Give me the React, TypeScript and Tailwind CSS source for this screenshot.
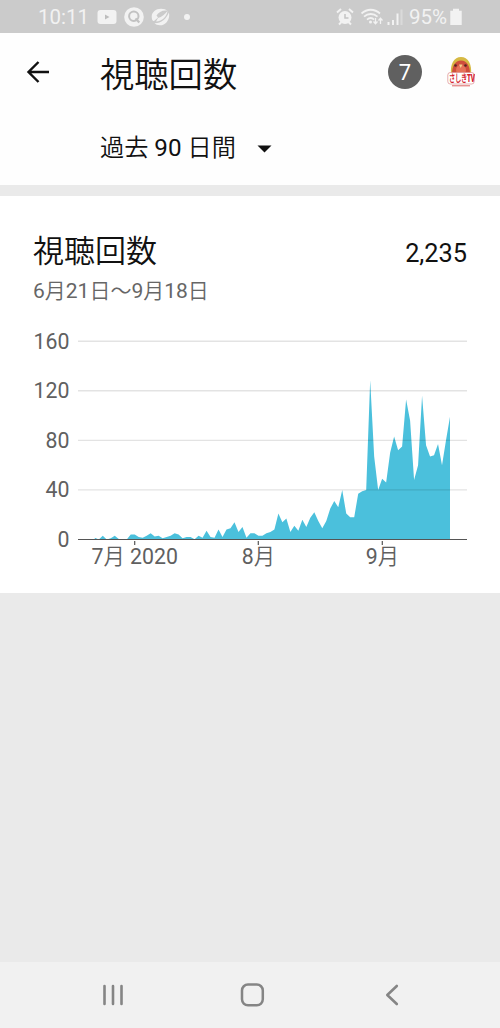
// daily views, June 21 - September 18
const views = [
  1.5, 0, 3, 0, 1, 3, 0.5, 0.5, 0, 4, 4, 2, 1.5, 3, 5, 2.5, 3, 1, 2, 3, 5, 4, 1, 2, 2, 0.3, 3, 1.5, 7,
  2, 1.5, 8, 2, 8, 9, 14, 6, 10, 1.5, 5, 5, 3, 3, 5, 6, 8, 21, 14, 17, 6, 11, 7, 16, 10, 17.5, 22, 15, 9, 15,
  25, 31, 26, 40, 21, 18, 18, 37, 39, 40, 128.5, 67, 40, 49, 46, 70, 83, 72, 75, 113, 96, 48, 60, 116, 76, 67, 68, 77, 60, 80, 99,
];

const yTicks = [160, 120, 80, 40, 0];
const xTicks = [
  { label: '7月 2020', x: 134.7 },
  { label: '8月', x: 258.3 },
  { label: '9月', x: 382.3 },
];

const BASE = 219.5;
const toY = (v: number) => BASE - v * 1.2395;

function StatusBar() {
  return (
    <div className="flex h-[33px] shrink-0 items-center bg-[#cbcbcb] pl-[38px] text-[20.5px] leading-none text-[#f2f2f2]">
      <span className="w-[59px] pt-0.5">10:11</span>
      <svg className="mr-[7px]" width="20" height="16" viewBox="0 0 20 16">
        <rect x="0.5" y="1" width="19" height="14" rx="3" fill="#f2f2f2" />
        <path d="M8 5.5v5l4.5-2.5z" fill="#bdbdbd" />
      </svg>
      <svg className="mr-[7px]" width="20" height="20" viewBox="0 0 20 20">
        <circle cx="10" cy="10" r="9.8" fill="#f2f2f2" />
        <circle cx="9.8" cy="9.3" r="4.7" fill="none" stroke="#c2c2c2" strokeWidth="2" />
        <path d="M11.5 11.5l3.8 4" stroke="#c2c2c2" strokeWidth="2.2" />
      </svg>
      <svg width="19" height="18" viewBox="0 0 19 18">
        <path d="M1 11C-.5 5 4 .7 10 .7c3 0 5 .8 6.500 2C12 1.800 7.500 4 5.500 7.500L7 9.500 3 13C2 13 1.300 12.500 1 11z" fill="#f2f2f2" />
        <path d="M17.800 4.500C19.500 10 15.500 17.300 9 17.300c-2.500 0-4.500-.8-5.500-2C10 15.500 15.500 11 17.800 4.500z" fill="#f2f2f2" />
        <path d="M7 10C11 9 14 6 16.500 3 15.500 9 11.500 13 5 13.500z" fill="#f2f2f2" />
      </svg>
      <span className="ml-[14px] size-1.5 rounded-full bg-[#f2f2f2]" />
      <svg className="ml-auto" width="18" height="18" viewBox="0 0 18 18" fill="none" stroke="#f2f2f2">
        <circle cx="9" cy="9.5" r="6.5" fill="#f2f2f2" stroke="none" />
        <path d="M9 6v4h3.500" stroke="#c4c4c4" strokeWidth="1.5" />
        <path d="M1 4.500l4-3.500M17 4.500l-4-3.500M3 16.500l2.500-2.500M15 16.500L12.500 14" strokeWidth="2" />
      </svg>
      <svg className="ml-1.5" width="24" height="18" viewBox="0 0 24 18" fill="none" stroke="#f2f2f2" strokeWidth="1.8">
        <path d="M1.500 5.500c5.500-5 13-5 18.500 0M4 8.700c4-3.600 9.500-3.600 13.500 0M7 11.600c2.500-2 5-2 7 0" />
        <circle cx="10.500" cy="14" r="1.500" fill="#f2f2f2" stroke="none" />
        <path d="M15.500 10v5.500M13.500 13.500l2 2.200 2-2.200M20.500 16v-5.500M18.500 12.500l2-2.200 2 2.200" strokeWidth="1.300" />
      </svg>
      <svg className="ml-[3px]" width="17" height="18" viewBox="0 0 17 18" strokeWidth="2">
        <path d="M1.500 17v-3M6 17V12M10.500 17V5.500" stroke="#f2f2f2" />
        <path d="M14.500 17V1.500" stroke="#dadada" />
      </svg>
      <span className="ml-[5px] w-[41px] pt-0.5">95%</span>
      <svg className="mr-[38px]" width="12" height="18" viewBox="0 0 12 18">
        <path d="M3 .8h6v2h2.700V17H.3V2.800H3z" fill="#f2f2f2" />
      </svg>
    </div>
  );
}

function Avatar() {
  return (
    <svg width="28" height="32" viewBox="0 0 28 32">
      <path d="M4 18C3 8 7 1 14 1s11 7 10 17z" fill="#d6b943" />
      <path d="M5 18c0-8 3-13.500 9-13.500S23 10 23 18z" fill="#cf4d3c" />
      <ellipse cx="14" cy="14" rx="5" ry="5" fill="#e57259" />
      <circle cx="8.500" cy="9.500" r="1.300" fill="#512522" />
      <circle cx="18.500" cy="9.500" r="1.300" fill="#512522" />
      <path d="M12 8.500h3.500L13.700 12z" fill="#f4d38b" />
      <rect x="0.800" y="16.500" width="26.400" height="11.500" rx="2.500" fill="#fff" stroke="#dc8c8c" strokeWidth="0.700" />
      <g transform="translate(2 26.200) scale(.63 1)" fontSize="10" fontWeight="900" fill="#d3202c">
        <text letterSpacing="-0.5">さしきTV</text>
      </g>
      <path d="M5 29.800h18" stroke="#d66" strokeWidth="1" />
    </svg>
  );
}

function ViewsChart() {
  const step = (450 - 94.8) / (views.length - 1);
  const points = views.map((v, i) => `${94.8 + i * step},${toY(v)}`).join(' ');

  return (
    <svg className="block" width="500" height="260" viewBox="0 0 500 260" fontSize="21.3" fill="#606060">
      <polygon points={`94.8,${BASE} ${points} 450,${BASE}`} fill="#4bc0dc" />
      {yTicks.map((v) => (
        <g key={v}>
          <text x="69.500" y={toY(v) + 7.5} textAnchor="end">{v}</text>
          <line x1="78" x2="467" y1={toY(v)} y2={toY(v)} stroke={v ? '#000' : '#555'} strokeOpacity={v ? 0.11 : 1} strokeWidth={v ? 1.4 : 1.2} />
        </g>
      ))}
      {xTicks.map((t) => (
        <g key={t.label}>
          <line x1={t.x} x2={t.x} y1="221" y2="225" stroke="#555" strokeWidth="1.2" />
          <text x={t.x} y="244" textAnchor="middle">{t.label}</text>
        </g>
      ))}
    </svg>
  );
}

function NavBar() {
  return (
    <div className="flex h-[66px] shrink-0 items-center bg-[#f1f1f1] pl-[102px]">
      <svg width="22" height="24" viewBox="0 0 22 24" stroke="#858585" strokeWidth="2.6" strokeLinecap="round">
        <path d="M2.500 3v18M11 3v18M19.500 3v18" />
      </svg>
      <svg className="ml-[116px]" width="25" height="24" viewBox="0 0 25 24">
        <rect x="2" y="1.500" width="20.800" height="20.800" rx="6" fill="none" stroke="#858585" strokeWidth="2.5" />
      </svg>
      <svg className="ml-[120px]" width="14" height="24" viewBox="0 0 14 24" fill="none" stroke="#858585" strokeWidth="2.6" strokeLinecap="round" strokeLinejoin="round">
        <path d="M11.800 3L2.300 12l9.500 9" />
      </svg>
    </div>
  );
}

export default function App() {
  return (
    <div className="flex h-[1028px] w-[500px] flex-col bg-[#eaeaea] font-['Roboto','Noto_Sans_CJK_JP_DemiLight','Noto_Sans_CJK_JP',sans-serif] text-[#111]">
      <StatusBar />
      <header className="h-[152px] shrink-0 bg-[#fefefe]">
        <div className="flex h-[78px] items-center pr-[25px] pl-[26px]">
          <svg width="24" height="24" viewBox="0 0 24 24" fill="none" stroke="#111" strokeWidth="2.4">
            <path d="M23 12H2.500M12.500 2L2.500 12l10 10" />
          </svg>
          <h1 className="ml-[50px] pt-1.5 text-[34.3px] leading-none">視聴回数</h1>
          <span className="ml-auto flex size-[34px] items-center justify-center rounded-full bg-[#606060] pt-0.5 text-[22px] leading-none text-white">7</span>
          <div className="ml-[25px]">
            <Avatar />
          </div>
        </div>
        <button className="flex h-[74px] items-center pl-[100px] text-[24.2px]">
          過去 90 日間
          <svg className="mt-0.5 ml-[21px]" width="15" height="8" viewBox="0 0 15 8">
            <path d="M.5.500h14L7.500 7.500z" fill="#111" />
          </svg>
        </button>
      </header>

      <section className="mt-[11px] h-[397px] shrink-0 bg-white">
        <div className="flex h-[76px] items-end justify-between pr-[33px] pl-[33px]">
          <h2 className="pb-[5px] text-[31px] leading-none">視聴回数</h2>
          <span className="pb-[6px] text-[25.3px] leading-none">2,235</span>
        </div>
        <p className="h-12 pt-[9px] pl-[33px] text-[21px] leading-none text-[#666]">6月21日〜9月18日</p>
        <ViewsChart />
      </section>

      <div className="flex-1" />
      <NavBar />
    </div>
  );
}
